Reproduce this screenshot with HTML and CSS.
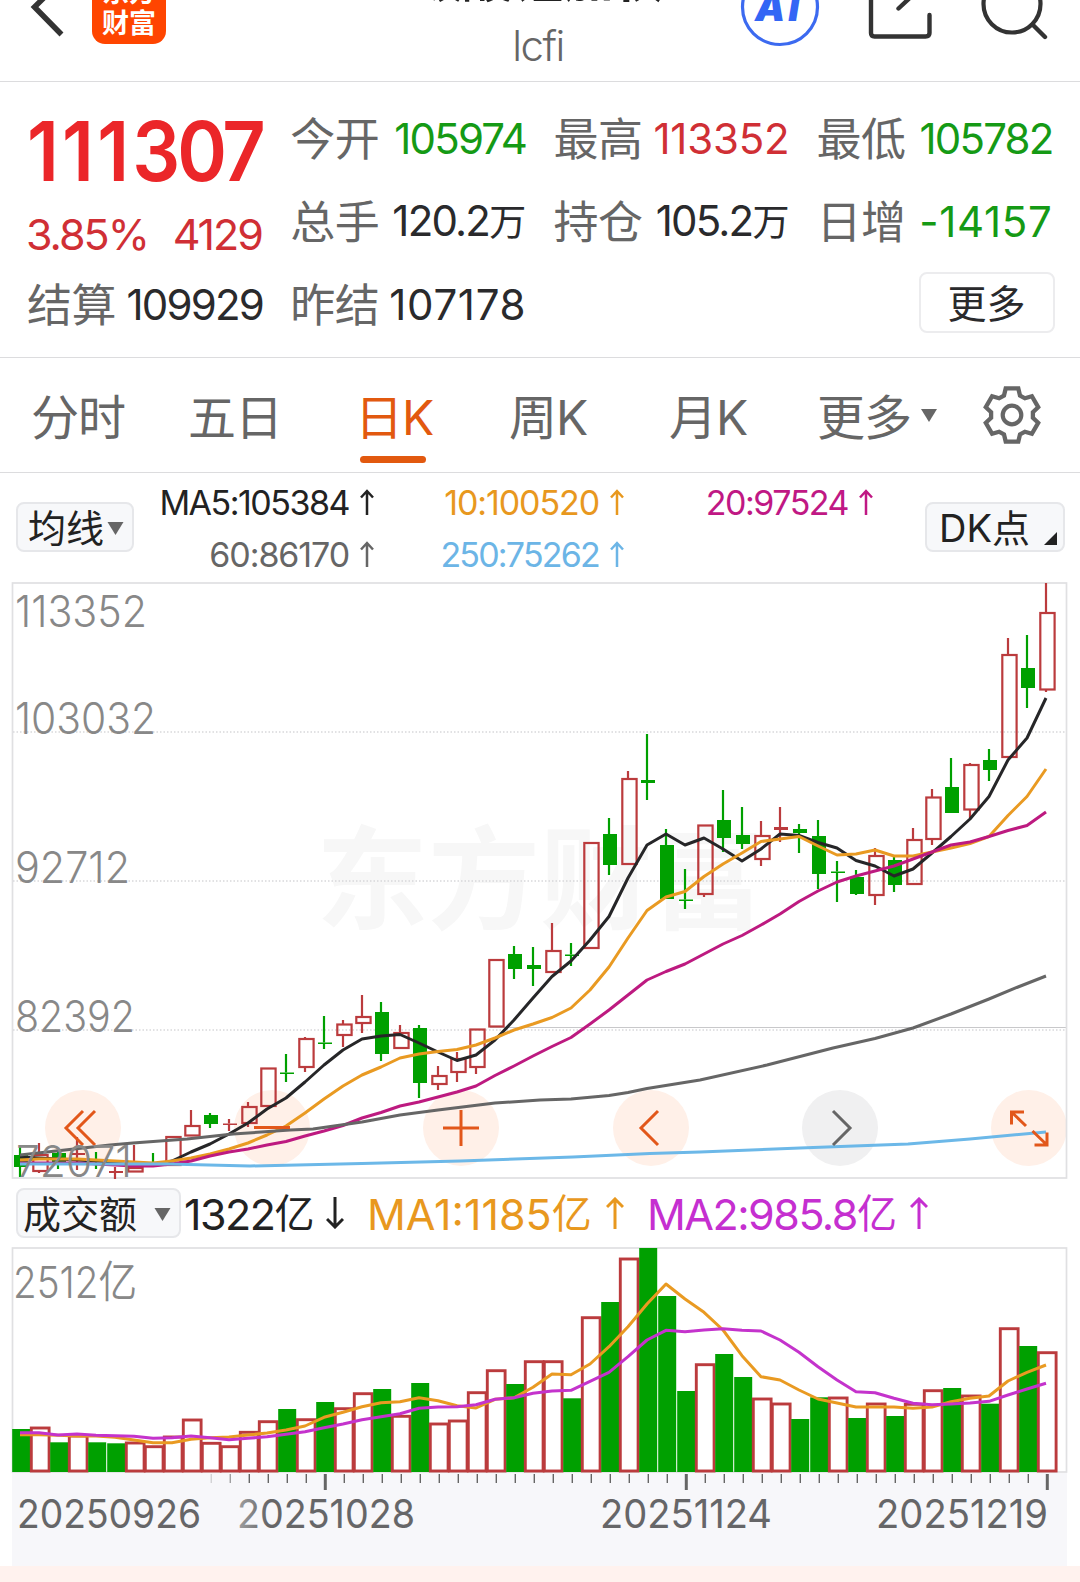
FILE: index.html
```html
<!DOCTYPE html>
<html lang="zh-CN">
<head>
<meta charset="utf-8">
<title>碳酸锂加权 lcfi</title>
<link rel="stylesheet" href="styles.css">
</head>
<body>
<header class="topbar">
  <div class="topbar-left">
    <svg class="icon-back" width="92" height="81" viewBox="0 0 92 81"><path d="M62 -20 L34.500 7 L61.500 34.500" fill="none" stroke="#333" stroke-width="5.500"/></svg>
    <div class="logo"><span>东方</span><span>财富</span></div>
  </div>
  <div class="title"><span class="title-name">碳酸锂加权</span><span class="title-code">lcfi</span></div>
  <div class="topbar-right">
    <svg width="80" height="81" viewBox="740 0 80 81"><circle cx="780" cy="7" r="37.500" fill="none" stroke="#3c6af0" stroke-width="3.200"/><text class="ai-text" x="755" y="21">Ai</text></svg>
    <svg width="66" height="81" viewBox="866 0 66 81"><path d="M870 -18 V33 Q870 36.500 873.500 36.500 H924.500 Q928.500 36.500 928.500 33 V15 M897.500 8.500 L913 -6" fill="none" stroke="#333" stroke-width="4.400" stroke-linecap="round"/></svg>
    <svg width="68" height="81" viewBox="980 0 68 81"><circle cx="1012" cy="4" r="28.500" fill="none" stroke="#333" stroke-width="4.200"/><path d="M1032.500 24.500 L1045 37" stroke="#333" stroke-width="4.400" stroke-linecap="round"/></svg>
  </div>
</header>

<section class="quote">
  <div class="price-block">
    <div class="price"><span class="ones">111</span>307</div>
    <div class="change"><span>3.85%</span><span>4129</span></div>
  </div>
  <div class="cell"><span class="label">今开</span><span class="num down">105974</span></div>
  <div class="cell"><span class="label">最高</span><span class="num up wide">113352</span></div>
  <div class="cell"><span class="label">最低</span><span class="num down">105782</span></div>
  <div class="cell"><span class="label">总手</span><span class="num">120.2<i>万</i></span></div>
  <div class="cell"><span class="label">持仓</span><span class="num">105.2<i>万</i></span></div>
  <div class="cell"><span class="label">日增</span><span class="num down wider">-14157</span></div>
  <div class="cell"><span class="label">结算</span><span class="num">109929</span></div>
  <div class="cell"><span class="label">昨结</span><span class="num wider">107178</span></div>
  <button class="more-btn">更多</button>
</section>

<nav class="tabs">
  <span class="tab">分时</span>
  <span class="tab">五日</span>
  <span class="tab active">日K</span>
  <span class="tab">周K</span>
  <span class="tab">月K</span>
  <span class="tab tab-more">更多<svg width="16" height="13" viewBox="0 0 16 13"><path d="M0 0H16L8 13Z" fill="#666"/></svg></span>
  <svg class="gear" width="62" height="62" viewBox="-31 -31 62 62"><path id="gear-path" fill="none" stroke="#666" stroke-width="4.300" d=""/><circle r="9.300" fill="none" stroke="#666" stroke-width="4.200"/></svg>
</nav>

<section class="legend">
  <div class="chip chip-ma">均线<svg width="17" height="13" viewBox="0 0 16 13"><path d="M0 0H16L8 13Z" fill="#666"/></svg></div>
  <div class="ma-grid">
    <span class="ma c-dark tight">MA5:105384<svg class="arrow"><use href="#up"/></svg></span>
    <span class="ma c-orange">10:100520<svg class="arrow"><use href="#up"/></svg></span>
    <span class="ma c-magenta tight">20:97524<svg class="arrow"><use href="#up"/></svg></span>
    <span class="ma c-gray">60:86170<svg class="arrow"><use href="#up"/></svg></span>
    <span class="ma c-blue tighter">250:75262<svg class="arrow"><use href="#up"/></svg></span>
  </div>
  <div class="chip chip-dk">DK点<svg width="13" height="13" viewBox="0 0 13 13"><path d="M13 0V13H0Z" fill="#222"/></svg></div>
</section>

<svg class="kline" id="kline" width="1080" height="597" viewBox="0 582 1080 597"></svg>

<section class="vol-legend">
  <div class="chip chip-vol">成交额<svg width="17" height="13" viewBox="0 0 16 13"><path d="M0 0H16L8 13Z" fill="#666"/></svg></div>
  <span class="vol v0 c-dark">1322<i>亿</i><svg class="arrow-lg"><use href="#down-lg"/></svg></span>
  <span class="vol v1 c-orange">MA1:1185<i>亿</i><svg class="arrow-lg"><use href="#up-lg"/></svg></span>
  <span class="vol v2 c-purple">MA2:985.8<i>亿</i><svg class="arrow-lg"><use href="#up-lg"/></svg></span>
</section>

<svg class="volume" id="volume" width="1080" height="226" viewBox="0 1247 1080 226"></svg>
<svg class="axis" id="axis" width="1080" height="93" viewBox="0 1473 1080 93"></svg>
<footer class="strip"></footer>

<svg class="defs" width="0" height="0">
  <symbol id="up" viewBox="0 0 14 26"><path d="M7 26V2M1 8.500L7 2L13 8.500" fill="none" stroke="currentColor" stroke-width="2.500"/></symbol>
  <symbol id="up-lg" viewBox="0 0 18 32"><path d="M9 32V2M1 10L9 2L17 10" fill="none" stroke="currentColor" stroke-width="3"/></symbol>
  <symbol id="down-lg" viewBox="0 0 18 32"><path d="M9 0V30M1 22L9 30L17 22" fill="none" stroke="currentColor" stroke-width="3"/></symbol>
</svg>
<script src="chart.js"></script>
</body>
</html>
```

FILE: styles.css
```css
* { box-sizing: border-box; }
body {
  margin: 0;
  width: 1080px;
  height: 1582px;
  overflow: hidden;
  background: #fff;
  color: #2a2a2c;
  font-family: Inter, "Noto Sans CJK SC", sans-serif;
}
i { font-style: normal; }
svg { display: block; flex: none; }
.defs { position: absolute; }

.topbar {
  display: grid;
  grid-template-columns: 1fr auto 1fr;
  height: 82px;
  border-bottom: 1.5px solid #dcdcde;
  overflow: hidden;
}
.topbar-left { display: flex; align-items: flex-start; }
.logo {
  display: flex;
  flex-direction: column;
  justify-content: flex-end;
  align-items: center;
  width: 74px;
  height: 75px;
  margin-top: -31px;
  padding-bottom: 5px;
  border-radius: 13px;
  background: #ff4500;
  color: #fff;
  font-size: 27px;
  font-weight: 700;
  line-height: 31px;
}
.title { display: flex; flex-direction: column; align-items: center; margin: -51px 4px 0 0; }
.title-name { font-size: 50.5px; line-height: 60px; font-weight: 700; color: #222; }
.title-code { font-size: 42px; line-height: 50px; margin-top: 12px; color: #666; letter-spacing: -1.5px; font-weight: 350; }
.topbar-right { display: flex; justify-content: flex-end; padding-right: 32px; gap: 47px; }
.ai-text { font: italic 900 38px Inter, sans-serif; fill: #3366f5; letter-spacing: 3px; }

.quote {
  display: grid;
  grid-template-columns: repeat(4, 236px);
  grid-template-rows: repeat(3, 83px);
  column-gap: 27.2px;
  height: 276px;
  padding: 14px 0 0 27px;
  border-bottom: 1.5px solid #dcdcde;
}
.price-block { grid-row: span 2; }
.price {
  margin-top: 8px;
  font-size: 82px;
  line-height: 96px;
  font-weight: 600;
  letter-spacing: -3.5px;
  color: #eb2629;
  white-space: nowrap;
  transform: scaleX(0.92);
  transform-origin: 0 0;
}
.price .ones { letter-spacing: 3.5px; }
.change {
  display: flex;
  justify-content: space-between;
  font-size: 43px;
  line-height: 50px;
  margin: 9px 0 0 -1px;
  padding-right: 1px;
  letter-spacing: -2px;
  color: #d02f35;
}
.cell { display: flex; justify-content: space-between; align-items: center; height: 83px; white-space: nowrap; }
.label { font-size: 45px; line-height: 60px; letter-spacing: -0.5px; padding-top: 5px; color: #666; }
.num { font-size: 42px; line-height: 60px; padding-top: 2px; letter-spacing: -1.8px; }
.num i { font-size: 37px; letter-spacing: 0; }
.num.wide { letter-spacing: -0.2px; }
.num.wider { letter-spacing: 0.7px; }
.up { color: #d02f35; }
.down { color: #159a15; }
.more-btn {
  grid-column: 4;
  align-self: center;
  justify-self: end;
  width: 136px;
  height: 61px;
  margin: 0 -2px 2px 0;
  padding: 0 0 3px;
  border: 2px solid #ececee;
  border-radius: 8px;
  background: #fff;
  color: #2a2a2c;
  font: 39px/54px "Noto Sans CJK SC", sans-serif;
}

.tabs {
  display: grid;
  grid-template-columns: 157px 167px 154px 160px 148px 164px 62px;
  align-items: center;
  height: 115px;
  padding: 0 0 0 31px;
  border-bottom: 1.5px solid #dcdcde;
  font-size: 48px;
  line-height: 60px;
  color: #666;
}
.tab { display: flex; align-items: center; height: 100%; padding-top: 5px; white-space: nowrap; letter-spacing: -0.9px; }
.tab.active { position: relative; color: #e2590f; }
.tab.active::after {
  content: "";
  position: absolute;
  left: 5px;
  bottom: 9px;
  width: 66px;
  height: 7px;
  border-radius: 4px;
  background: #e2590f;
}
.tab-more svg { margin: -5px 0 0 10px; }

.legend { display: flex; align-items: flex-start; height: 109px; padding: 0 15px 0 16px; }
.chip {
  display: flex;
  align-items: center;
  height: 50px;
  padding-top: 2px;
  border: 2px solid #e6e7ea;
  border-radius: 8px;
  background: #f7f8fa;
  color: #222;
  font-size: 38px;
  line-height: 46px;
  white-space: nowrap;
}
.chip-ma { width: 118px; margin-top: 29px; padding-left: 10px; }
.chip-ma svg { margin-left: 3px; }
.chip-dk { width: 140px; margin: 29px 0 0 auto; padding-left: 12px; }
.chip-dk svg { margin: 21px 6px 0 auto; }
.ma-grid {
  display: grid;
  grid-template-columns: 218px 250px 249px;
  grid-template-rows: 52px 52px;
  padding-top: 4px;
  margin-left: 22px;
}
.ma {
  display: flex;
  align-items: center;
  justify-content: flex-end;
  font-size: 34px;
  line-height: 52px;
  letter-spacing: -1.1px;
  white-space: nowrap;
}
.ma.tight { letter-spacing: -1.5px; }
.ma.tighter { letter-spacing: -1.8px; }
.arrow { width: 14px; height: 26px; margin: -3px 0 0 11px; }
.c-dark { color: #222; }
.c-orange { color: #e8981e; }
.c-magenta { color: #c01884; }
.c-gray { color: #666; }
.c-blue { color: #6cb5e6; }
.c-purple { color: #c52fd0; }

.vol-legend { display: flex; align-items: center; height: 68px; padding-left: 16px; }
.chip-vol { width: 165px; padding-left: 5px; }
.chip-vol svg { margin-left: 17px; }
.vol { display: flex; align-items: center; font-size: 43px; line-height: 60px; padding-top: 1px; letter-spacing: -1.5px; white-space: nowrap; }
.vol i { font-size: 40px; letter-spacing: 0; padding-top: 1px; }
.v0 { width: 182px; padding-left: 3px; }
.v1 { width: 280px; padding-left: 4px; letter-spacing: 0; }
.v2 { width: 304px; padding-left: 4px; }
.arrow-lg { width: 18px; height: 32px; margin: -2px 19px 0 auto; }

.grid-label { font-size: 44px; fill: #888; font-weight: 350; }
.date-label { font-size: 40px; font-weight: 400; }
.watermark { font: 700 112px "Noto Sans CJK SC", sans-serif; fill: #f7f7f7; }
.strip { height: 16px; background: #fff2ee; }
```

FILE: chart.js
```js
const X0 = 20, STEP = 19, RED = '#bb3b3d', GREEN = '#00a000';
const put = (id, parts) => { document.getElementById(id).innerHTML = parts.join(''); };
const label = (text, x, y, w, cls, extra = '') =>
  `<text class="${cls}" x="${x}" y="${y}" textLength="${w}" lengthAdjust="spacingAndGlyphs" ${extra}>${text}</text>`;
const line = (pts, color, w) =>
  `<polyline points="${pts.map(p => p.join(',')).join(' ')}" fill="none" stroke="${color}" stroke-width="${w}" stroke-linejoin="round"/>`;
const series = (ys) => ys.map((y, i) => [X0 + STEP * i, y]);

/* gear outline: one tooth repeated every 60 degrees */
const tooth = [[-8, -19.5], [-6.3, -26.6], [6.3, -26.6], [8, -19.5]];
let gear = [];
for (let k = 0; k < 6; k++) {
  const a = k * Math.PI / 3, c = Math.cos(a), s = Math.sin(a);
  tooth.forEach(([x, y]) => gear.push([(x * c - y * s).toFixed(1), (x * s + y * c).toFixed(1)]));
}
document.getElementById('gear-path').setAttribute('d', 'M' + gear.map(p => p.join(' ')).join('L') + 'Z');

/* candles: [direction, body top, body bottom, high, low] */
const candles = [
  ['g',1155,1167,1147,1177],['r',1155,1171,1143,1173],['g',1153,1162,1152,1169],['r',1153,1155,1137,1170],
  ['g',1164,1165,1152,1169],['r',1171,1173,1167,1179],['r',1168,1171.5,1145,1172],['g',1163,1164,1153,1165],
  ['r',1137,1165,1137,1165],['r',1126,1135.5,1110,1136],['g',1115,1124,1113,1128],['r',1123.5,1125,1119,1131],
  ['r',1107,1123,1102,1127],['r',1068.5,1106,1068,1106],['g',1072.5,1074,1054,1082],['r',1039,1067,1037,1072],
  ['g',1042.5,1044,1016,1049],['r',1024.5,1035,1020,1047],['r',1017,1023,995,1033],['g',1012,1054,1002,1061],
  ['r',1033,1048,1025,1048],['g',1028,1083,1025,1098],['r',1076,1084,1066,1090],['r',1059,1072,1052,1082],
  ['r',1029.5,1067,1029,1074],['r',960,1026.5,960,1026],['g',954,969,946,979],['g',965,969,947,986],
  ['r',951,972,923,972],['g',954.5,956,943,966],['r',843,948,843,948],['g',834,865,818,875],
  ['r',779,864,771,864],['g',780,783,734,800],['g',845,899,829,899],['g',899.5,901,869,909],
  ['r',825.5,894,825,897],['g',820,838,790,852],['g',835,844,807,849],['r',836,859,821,866],
  ['r',827,830,807,842],['g',829,833,824,853],['g',836,874,820,889],['g',871.5,873,861,902],
  ['g',877,894,870,895],['r',856,895,848,905],['g',860,885,857,892],['r',840,884,828,884],
  ['r',797.5,839,789,845],['g',787,813,758,813],['r',765,809.5,763,818],['g',760,770,749,781],
  ['r',655,757,638,757],['g',668,688,635,708],['r',613,689.5,583,692]
];
const ma5 = [1157,1158,1159,1160,1161,1162,1164,1165,1161,1152,1144,1134,1123,1109,1098,1082,1065,1050,1039,1036,1034.5,1043,1052,1060.5,1055,1040,1020,998,976.5,961,940,916.5,878,845,834,845,838,849,861,849,834,835.5,842.5,848,860.5,866,876,869,853,836.5,819,796.5,760,738,698];
const ma10 = [1160,1159,1159,1159,1160,1161,1162,1163,1161,1158,1154,1149,1143,1135,1126,1113,1099,1086,1075,1067,1058,1054,1051.5,1049.5,1045,1038,1030,1024,1017.5,1008,990,967,938,910.5,897,891.5,876.5,864,853,841.5,839,836.5,846,855,854,850,856,856,852,848,843.5,836.5,815.5,796.5,769];
const ma20 = [1163,1163,1163,1163,1164,1165,1166,1166,1164,1161,1156,1152,1149,1145,1141.5,1136,1131,1125.5,1118,1112.5,1106,1102,1097,1092,1086,1075.5,1066,1056,1046.5,1037.5,1024,1010,995,980,971.5,964,954,944,935.5,925,914,901.5,891,882,876,871,866,859,852,845,842,836.5,830.5,825.5,812];
const ma60 = [[20,1155],[110,1145],[133,1143],[187,1139],[233,1134],[290,1130],[313,1129],[362,1122],[400,1115],[438,1110],[495,1103],[540,1100],[571,1099],[609,1095.5],[628,1092.5],[647,1088.5],[700,1080],[767,1065],[833,1048],[875,1038.5],[913,1028],[951,1014],[989,999],[1018,987],[1046,976]];
const ma250 = [[20,1164],[167,1164],[250,1166],[362,1163.5],[460,1161],[573,1157],[650,1153.5],[700,1152],[800,1148],[908,1144],[970,1139],[1046,1132]];

const k = [];
k.push('<text class="watermark" x="316" y="921">东方财富</text>');
[83, 272, 461, 651, 840, 1029].forEach((cx, i) =>
  k.push(`<circle cx="${cx}" cy="1128" r="38" fill="${i === 4 ? '#f0f0f1' : '#fff0e8'}"/>`));
[732, 881, 1030].forEach(y => k.push(`<path d="M13 ${y}H1067" stroke="#d8d8da" stroke-width="1.5" stroke-dasharray="1.5 2"/>`));
k.push('<path d="M490 1027.500H1067" stroke="#c8c8ca" stroke-width="1"/>');
k.push('<rect x="12.500" y="583" width="1054" height="595" fill="none" stroke="#e0e0e2" stroke-width="1.700"/>');
candles.forEach(([d, t, b, h, l], i) => {
  const x = X0 + STEP * i, c = d === 'r' ? RED : GREEN;
  const hollow = d === 'r' && b - t > 3.2;
  if (h < t) k.push(`<path d="M${x} ${h}V${t}" stroke="${c}" stroke-width="2.2"/>`);
  if (l > b) k.push(`<path d="M${x} ${b}V${l}" stroke="${c}" stroke-width="2.2"/>`);
  k.push(hollow
    ? `<rect x="${x - 5.7}" y="${t}" width="14.300" height="${b - t}" fill="none" stroke="${c}" stroke-width="2.2"/>`
    : `<rect x="${x - 6}" y="${t}" width="14" height="${b - t}" fill="${c}"/>`);
});
k.push(line(series(ma5), '#262628', 3), line(series(ma10), '#e99a22', 3), line(series(ma20), '#bd1a80', 3),
  line(ma60, '#666', 3), line(ma250, '#6cb8e8', 3));
k.push('<g fill="none" stroke="#e2571a" stroke-width="3">',
  '<path d="M83 1111L66 1128L83 1145M95 1111L78 1128L95 1145"/>',
  '<path d="M254 1127.500H290"/><path d="M443 1128H479M461 1110V1146"/>',
  '<path d="M658 1111L641 1128L658 1145"/><path d="M833 1111L850 1128L833 1145" stroke="#666"/>',
  '<path d="M1024 1112H1011.500V1124.500M1011.500 1112L1026 1126M1047 1132.500V1145H1034.500M1047 1145L1032.500 1131"/></g>');
k.push(label('113352', 15, 627, 132, 'grid-label'), label('103032', 15, 734, 141, 'grid-label'),
  label('92712', 15, 883, 115, 'grid-label'), label('82392', 15, 1032, 120, 'grid-label'),
  label('72071', 16, 1177, 116, 'grid-label'));
put('kline', k);

/* turnover bars: direction and distance of the top below the legend line, in thirds of a pixel */
const bars = 'g747 r741 g787 r765 g787 g790 r786 r797 r768 r717 r787 r797 r754 r722 g687 r716 g666 r683 r638 g627 r706 g609 r729 r720 r635 r569 g612 r542 r542 g655 r410 g366 r234 g204 g348 g633 r551 g522 g591 r654 r669 g717 g652 r651 g714 r669 g708 r670 r629 g624 r645 g671 r443 g498 r515'.split(' ');
const vm1 = [764,764,766,768,768,772,780,788,788,778,773,771,765,759,750,738,712,697,680,668,665,653,662,677,684,658,653,622,582,584,552,500,440,372,312,357,397,450,527,590,600,630,657,669,681,681,681,685,681,665,655,648,603,577,555];
const vm2 = [758,758,765,762,766,767,769,775,773,768,773,779,775,770,763,755,743,732,719,710,701,685,681,680,674,658,653,640,633,631,604,577,530,480,451,455,450,446,451,453,480,517,560,600,635,638,655,670,674,672,669,664,645,627,610];
const vy = v => +(1180 + v / 3).toFixed(1);
const v = ['<rect x="12.500" y="1248" width="1054" height="224" fill="none" stroke="#e0e0e2" stroke-width="1.700"/>'];
bars.forEach((s, i) => {
  const x = 12.2 + STEP * i, y = vy(+s.slice(1));
  v.push(s[0] === 'g'
    ? `<rect x="${x.toFixed(1)}" y="${y}" width="18" height="${(1472 - y).toFixed(1)}" fill="${GREEN}"/>`
    : `<rect x="${(x + 0.1).toFixed(1)}" y="${y + 1}" width="17.800" height="${(1470 - y).toFixed(1)}" fill="#fff" stroke="${RED}" stroke-width="2.900"/>`);
});
v.push(line(series(vm1.map(vy)), '#e99a22', 3), line(series(vm2.map(vy)), '#c433cc', 3));
v.push(label('2512亿', 13, 1298, 124, 'grid-label'));
put('volume', v);

const a = ['<defs><linearGradient id="fade" gradientUnits="userSpaceOnUse" x1="232" y1="0" x2="268" y2="0"><stop offset="0" stop-color="#aaa"/><stop offset="1" stop-color="#666668"/></linearGradient></defs>',
  '<rect x="12" y="1473" width="1055" height="93" fill="#f7f7fa"/>'];
for (let i = 10; i < 55; i++) {
  const big = i === 16 || i === 35 || i === 54;
  a.push(`<path d="M${X0 + STEP * i + 1.3} 1474V${big ? 1490 : 1483}" stroke="#666" stroke-opacity="${i === 10 ? 0.25 : i === 11 ? 0.6 : 1}" stroke-width="${big ? 3 : 1.4}"/>`);
}
a.push(label('20250926', 17, 1528, 184, 'date-label', 'fill="#666668"'), label('20251028', 237, 1528, 178, 'date-label', 'fill="url(#fade)"'),
  label('20251124', 600, 1528, 172, 'date-label', 'fill="#666668"'), label('20251219', 876, 1528, 172, 'date-label', 'fill="#666668"'));
put('axis', a);
```
